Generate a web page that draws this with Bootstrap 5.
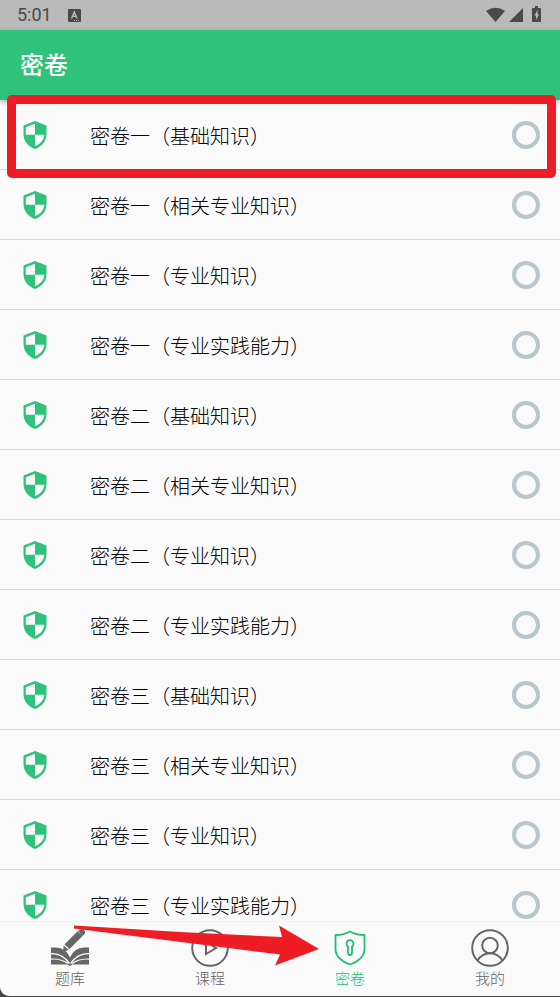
<!DOCTYPE html>
<html lang="zh-CN">
<head>
<meta charset="utf-8">
<meta name="viewport" content="width=device-width, initial-scale=1">
<title>密卷</title>
<link href="https://cdn.jsdelivr.net/npm/bootstrap@5.3.0/dist/css/bootstrap.min.css" rel="stylesheet">
<style>
body { font-family: "Noto Sans CJK SC", sans-serif; background: #fafafa; color: #212121; }
.status-bar { height: 30px; padding: 0 16px 0 17px; background: #bababa; color: #4a4a4a; font: 18px/30px Roboto, sans-serif; }
.app-bar { height: 70px; padding-bottom: 2px; background: #2fc27b; box-shadow: 0 2px 5px rgba(0,0,0,.3); z-index: 1; }
.app-bar h1 { font-size: 24px; line-height: 36px; font-weight: 500; }
.paper-area { min-height: 0; }
.paper-scroll { scrollbar-width: none; }
.paper-scroll::-webkit-scrollbar { display: none; }
.paper { height: 70px; padding: 0 20px 0 21px; border-bottom: 1px solid #dadada; cursor: pointer; }
.paper-name, .tab { font-weight: 300; }
.paper-name { font-size: 20px; line-height: 30px; margin-left: 41px; padding-top: 2px; color: #000; }
.paper-radio { appearance: none; width: 28px; height: 28px; border: 4px solid #b7c7cc; border-radius: 50%; margin: 0; }
.paper-radio:checked { background: radial-gradient(#2fc27b 45%, transparent 50%); }
.highlight { top: -5px; left: 7px; right: 4px; height: 83px; border: 9px solid #ee1c24; border-radius: 5px; z-index: 2; pointer-events: none; }
.dock { background: #464349; padding-bottom: 1px; }
.tabs { height: 75px; padding-top: 7px; background: #fafafa; border-top: 1px solid #f2f2f2; border-bottom-left-radius: 9px; }
.tab { color: #666; font-size: 15px; line-height: 22px; }
.tab.active { color: #22be72; }
.arrow { left: 74px; top: 4px; z-index: 2; pointer-events: none; }
</style>
<script src="https://cdn.jsdelivr.net/npm/bootstrap@5.3.0/dist/js/bootstrap.bundle.min.js"></script>
</head>
<body>
<svg class="d-none">
  <symbol id="shield" viewBox="0 0 24 28">
    <path fill="#2fc27b" fill-rule="evenodd" d="M12 0 23.500 4.500V13C23.500 20 19 25.500 12 28 5 25.500 .5 20 .5 13V4.500ZM12 2.700 2.800 6.300V13.800H12ZM12 13.800V25.300C17.500 23 21 19 21.300 13.800Z"/>
  </symbol>
</svg>
<div class="d-flex flex-column vh-100">
  <div class="status-bar d-flex align-items-center flex-shrink-0">
    <span>5:01</span>
    <svg class="ms-3" width="13" height="13" viewBox="0 0 13 13"><rect width="13" height="13" rx="1" fill="#4a4a4a"/><path d="M3.500 9.500 6.300 3 9 9.500M4.600 7.300H8" fill="none" stroke="#bababa" stroke-width="1.400"/><path d="M6 11.500h5" stroke="#bababa" stroke-dasharray="1 1"/></svg>
    <svg class="ms-auto" width="58" height="18" viewBox="0 0 58 18" fill="#4a4a4a"><path d="M0 5Q9.500-1.500 19 5L9.500 16ZM23 16 37 2V16ZM49 0h3v2h2.200q.8 0 .8.800V15.200q0 .8-.8.800H46.800q-.8 0-.8-.8V2.800q0-.8.800-.8H49Z"/><path d="M51.500 4 48.500 9.500H50V14L53 8.300H51.500Z" fill="#bababa"/></svg>
  </div>
  <header class="app-bar d-flex align-items-center flex-shrink-0 px-3 position-relative">
    <h1 class="text-white m-0 ps-1">密卷</h1>
  </header>
  <main class="paper-area position-relative flex-grow-1 d-flex flex-column">
    <div class="highlight position-absolute"></div>
    <div class="paper-scroll overflow-auto flex-grow-1" id="papers"></div>
  </main>
  <footer class="dock position-relative flex-shrink-0">
    <nav class="tabs d-flex">
      <a href="#" class="tab flex-fill w-25 d-flex flex-column align-items-center text-decoration-none">
        <svg width="38" height="38" viewBox="0 0 38 38" fill="currentColor"><path d="M27 2 30 0q4.500 0 4 4.500L31.500 7ZM26.500 2.300 31.500 7 18.500 20 13.500 15.500ZM12.700 16.500 17.500 20.800 12 23.500Z"/><path d="M0 18.500H5Q15 19 19 28.500 23 19 33 18.500H38V24Q27 23 19 34 11 23 0 24ZM0 25.200Q10 25 17 33.500 9 29 0 29.500ZM38 25.200Q28 25 21 33.500 29 29 38 29.500ZM0 30.700Q10 30 17 35.500H0ZM38 30.700Q28 30 21 35.500H38ZM15 34.500H23L19 37Z"/></svg>
        <span>题库</span>
      </a>
      <a href="#" class="tab flex-fill w-25 d-flex flex-column align-items-center text-decoration-none">
        <svg width="38" height="38" viewBox="0 0 38 38" fill="none" stroke="currentColor" stroke-width="2"><circle cx="19" cy="19" r="17.800"/><path d="M15 13V25L25 19Z"/></svg>
        <span>课程</span>
      </a>
      <a href="#" class="tab active flex-fill w-25 d-flex flex-column align-items-center text-decoration-none" aria-current="page">
        <svg width="38" height="38" viewBox="0 0 38 38" fill="none" stroke="currentColor" stroke-width="1.800" stroke-linejoin="round"><path d="M19 2.500Q25 6 33.500 6V20C33.500 27.500 27 33 19 35.500 11 33 4.500 27.500 4.500 20V6Q13 6 19 2.500Z"/><path d="M17 17.500A3.500 3.500 0 1 1 21 17.500V24Q21 26 19 26 17 26 17 24Z"/></svg>
        <span>密卷</span>
      </a>
      <a href="#" class="tab flex-fill w-25 d-flex flex-column align-items-center text-decoration-none">
        <svg width="38" height="38" viewBox="0 0 38 38" fill="none" stroke="currentColor" stroke-width="2"><circle cx="19" cy="19" r="17.800"/><circle cx="19" cy="16.500" r="7.800"/><path d="M6.500 31.500Q11 24.300 19 24.300T31.500 31.500"/></svg>
        <span>我的</span>
      </a>
    </nav>
    <svg class="arrow position-absolute" width="245" height="41" viewBox="0 0 245 41"><path fill="#ee1c24" d="M0 .5V3.500L206 29.500 201 40.500 245 24 205 .5 208 12 106 7Z"/></svg>
  </footer>
</div>
<script>
const parts = ["基础知识", "相关专业知识", "专业知识", "专业实践能力"];
document.getElementById("papers").innerHTML = ["一", "二", "三"].flatMap(n => parts.map(p => `
  <label class="paper d-flex align-items-center">
    <svg width="28" height="28" aria-hidden="true"><use href="#shield"/></svg>
    <span class="paper-name flex-grow-1">密卷${n}（${p}）</span>
    <input class="paper-radio flex-shrink-0" type="radio" name="paper">
  </label>`)).join("");
</script>
</body>
</html>
